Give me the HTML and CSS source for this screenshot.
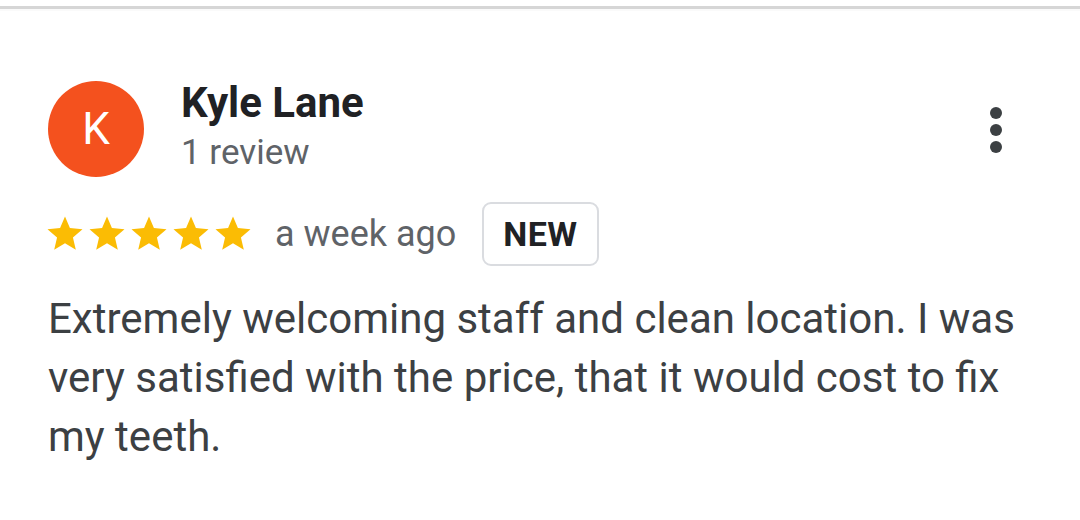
FILE: index.html
```html
<!DOCTYPE html>
<html lang="en">
<head>
    <meta charset="UTF-8">
    <title>Review</title>
    <link rel="stylesheet" href="styles.css">
</head>
<body>
    <div class="top-rule"></div>
    <div class="review">
        <div class="review-head">
            <div class="avatar">K</div>
            <div class="author">
                <div class="author-name">Kyle Lane</div>
                <div class="author-meta">1 review</div>
            </div>
            <div class="more" aria-label="More options">
                <span></span><span></span><span></span>
            </div>
        </div>
        <div class="review-rating">
            <div class="stars">
                <svg viewBox="0 0 24 24"><path d="M12 17.27L18.18 21l-1.64-7.03L22 9.24l-7.19-.61L12 2 9.19 8.63 2 9.24l5.46 4.73L5.82 21z"/></svg>
                <svg viewBox="0 0 24 24"><path d="M12 17.27L18.18 21l-1.64-7.03L22 9.24l-7.19-.61L12 2 9.19 8.63 2 9.24l5.46 4.73L5.82 21z"/></svg>
                <svg viewBox="0 0 24 24"><path d="M12 17.27L18.18 21l-1.64-7.03L22 9.24l-7.19-.61L12 2 9.19 8.63 2 9.24l5.46 4.73L5.82 21z"/></svg>
                <svg viewBox="0 0 24 24"><path d="M12 17.27L18.18 21l-1.64-7.03L22 9.24l-7.19-.61L12 2 9.19 8.63 2 9.24l5.46 4.73L5.82 21z"/></svg>
                <svg viewBox="0 0 24 24"><path d="M12 17.27L18.18 21l-1.64-7.03L22 9.24l-7.19-.61L12 2 9.19 8.63 2 9.24l5.46 4.73L5.82 21z"/></svg>
            </div>
            <span class="review-date">a week ago</span>
            <span class="badge">NEW</span>
        </div>
        <p class="review-text">Extremely welcoming staff and clean location. I was very satisfied with the price, that it would cost to fix my teeth.</p>
    </div>
</body>
</html>
```
FILE: styles.css
```css
body {
    margin: 0;
    background-color: #fff;
    font-family: Roboto, "Liberation Sans", sans-serif;
}
.top-rule {
    margin-top: 6px;
    height: 3px;
    background-color: #d6d6d6;
    border-bottom: 2px solid #fafafa;
}
.review {
    padding: 70px 48px 0 48px;
}
.review-head {
    display: flex;
    align-items: flex-start;
}
.avatar {
    width: 96px;
    height: 96px;
    border-radius: 50%;
    background-color: #f4511e;
    color: #fff;
    font-size: 44px;
    display: flex;
    align-items: center;
    justify-content: center;
    flex-shrink: 0;
}
.author {
    margin-left: 37px;
    flex: 1;
}
.author-name {
    font-size: 42px;
    font-weight: 700;
    color: #202124;
    line-height: 46px;
    margin-top: -1px;
}
.author-meta {
    font-size: 35px;
    color: #5f6368;
    line-height: 42px;
    margin-top: 6px;
}
.more {
    display: flex;
    flex-direction: column;
    gap: 5px;
    margin-top: 26px;
    margin-right: 30px;
}
.more span {
    width: 12px;
    height: 12px;
    border-radius: 50%;
    background-color: #3c4043;
}
.review-rating {
    display: flex;
    align-items: center;
    margin-top: 25px;
}
.stars {
    display: flex;
    margin-left: -4px;
}
.stars svg {
    width: 42px;
    height: 42px;
    fill: #fbbc04;
}
.review-date {
    font-size: 36px;
    color: #5f6368;
    margin-left: 21px;
}
.badge {
    margin-left: 26px;
    border: 2px solid #dadce0;
    border-radius: 9px;
    padding: 10px 19px;
    font-size: 34px;
    font-weight: 700;
    color: #202124;
    letter-spacing: 0.5px;
}
.review-text {
    margin: 23px 0 0 0;
    font-size: 42px;
    line-height: 59px;
    color: #3c4043;
}
```
